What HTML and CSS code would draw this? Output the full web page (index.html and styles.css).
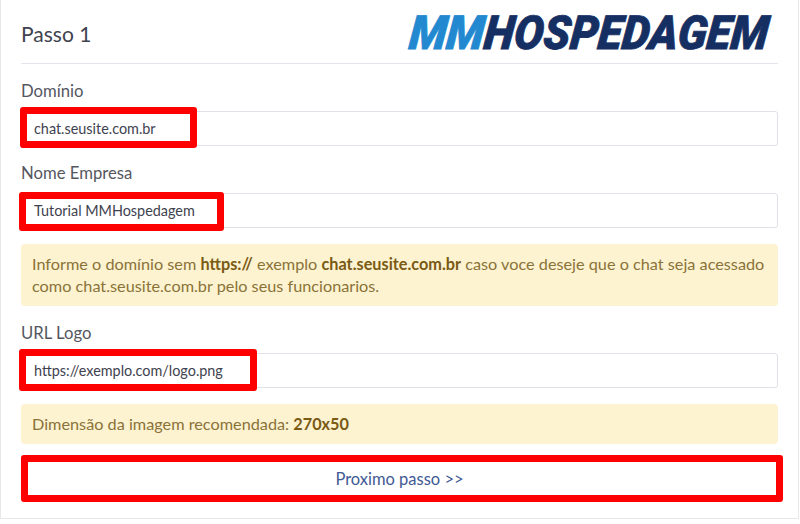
FILE: index.html
```html
<!DOCTYPE html>
<html lang="pt-BR">
<head>
    <meta charset="UTF-8">
    <meta name="viewport" content="width=device-width, initial-scale=1.0">
    <title>Passo 1</title>
    <link rel="stylesheet" href="styles.css">
</head>
<body>
    <div class="card">
        <div class="card-top">
            <h4 class="step-title">Passo 1</h4>
            <svg class="logo" width="372" height="44" viewBox="0 0 372 44" role="img" aria-label="MMHospedagem">
                <text class="logo-text" x="11" y="39" textLength="359" lengthAdjust="spacingAndGlyphs" transform="skewX(-6)"><tspan class="logo-mm">MM</tspan><tspan class="logo-rest">HOSPEDAGEM</tspan></text>
            </svg>
        </div>

        <div class="field">
            <label class="field-label">Domínio</label>
            <div class="input-wrap">
                <input class="input-box" type="text" value="chat.seusite.com.br">
                <span class="mark mark-domain"></span>
            </div>
        </div>

        <div class="field">
            <label class="field-label">Nome Empresa</label>
            <div class="input-wrap">
                <input class="input-box" type="text" value="Tutorial MMHospedagem">
                <span class="mark mark-name"></span>
            </div>
        </div>

        <div class="alert alert-first">
            Informe o domínio sem <b>https://</b> exemplo <b>chat.seusite.com.br</b> caso voce deseje que o chat seja acessado como chat.seusite.com.br pelo seus funcionarios.
        </div>

        <div class="field">
            <label class="field-label">URL Logo</label>
            <div class="input-wrap">
                <input class="input-box" type="text" value="https://exemplo.com/logo.png">
                <span class="mark mark-logo"></span>
            </div>
        </div>

        <div class="alert alert-second">
            Dimensão da imagem recomendada: <b>270x50</b>
        </div>

        <div class="input-wrap">
            <button class="btn-next" type="button">Proximo passo &gt;&gt;</button>
            <span class="mark mark-btn"></span>
        </div>
    </div>
</body>
</html>
```

FILE: styles.css
```css
html, body {
    margin: 0;
    height: 100%;
}
body {
    font-family: 'Lato', 'Open Sans', sans-serif;
    font-size: 16.7px;
    color: #55575f;
    background: #fff;
}
.card {
    box-sizing: border-box;
    width: 799px;
    height: 519px;
    padding: 0 20px;
    background: #fff;
    border: 1px solid #e8e8ea;
    border-top: none;
}
.card-top {
    display: flex;
    justify-content: space-between;
    align-items: center;
    height: 63px;
    border-bottom: 1px solid #e3e6f0;
    padding-right: 5px;
}
.step-title {
    margin: 0;
    padding-top: 3px;
    font-size: 21px;
    font-weight: 400;
    color: #3f4350;
}
.logo {
    display: block;
    overflow: visible;
}
.logo-text {
    font-family: 'Roboto', 'Liberation Sans', sans-serif;
    font-size: 47px;
    font-weight: 900;
    font-style: italic;
    stroke-width: 0.8px;
}
.logo-mm {
    fill: #2289d0;
    stroke: #2289d0;
}
.logo-rest {
    fill: #162f63;
    stroke: #162f63;
}
.field {
    margin-top: 15px;
}
.field-label {
    display: block;
    height: 24px;
    line-height: 25px;
    margin-bottom: 8px;
}
.input-wrap {
    position: relative;
}
.input-box {
    display: block;
    box-sizing: border-box;
    width: 100%;
    height: 35px;
    padding: 0 12px;
    font-family: inherit;
    font-size: 14.4px;
    color: #3f4350;
    background: #fff;
    border: 1px solid #e0e2e8;
    border-radius: 3px;
    outline: none;
}
.alert {
    box-sizing: border-box;
    margin-top: 16px;
    padding: 9px 11px 0;
    font-size: 16.25px;
    line-height: 22px;
    color: #8a7238;
    background: #fdf3d0;
    border-radius: 4px;
}
.alert b {
    color: #7a5a14;
}
.alert-first {
    height: 62px;
}
.alert-second {
    height: 40px;
}
.btn-next {
    display: block;
    width: 100%;
    height: 39px;
    margin-top: 15px;
    font-family: inherit;
    font-size: 16.5px;
    color: #3f5a94;
    background: #fff;
    border: 1px solid #3f5a94;
    border-radius: 4px;
}
/* anotacoes vermelhas por cima dos campos */
.mark {
    position: absolute;
    box-sizing: border-box;
    border: 7px solid #f00;
    border-radius: 3px;
    pointer-events: none;
}
.mark-domain {
    left: -1px;
    top: -4px;
    width: 177px;
    height: 41px;
}
.mark-name {
    left: -2px;
    top: -1px;
    width: 205px;
    height: 39px;
}
.mark-logo {
    left: -2px;
    top: -4px;
    width: 238px;
    height: 42px;
}
.mark-btn {
    left: 0;
    top: -4px;
    width: 762px;
    height: 47px;
}
```
